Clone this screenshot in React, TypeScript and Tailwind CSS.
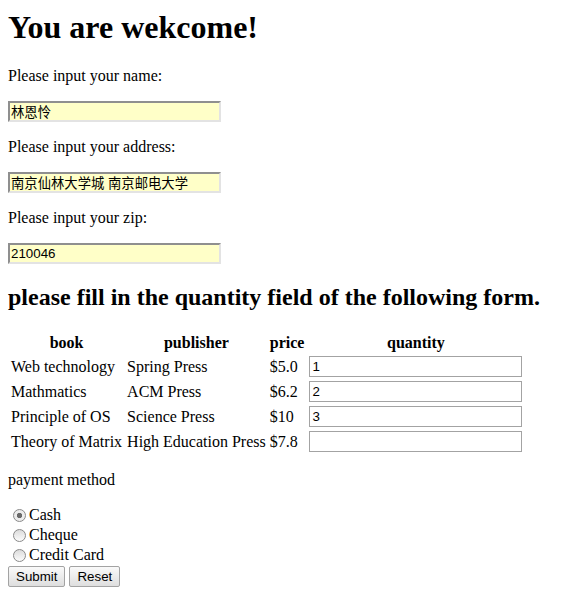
const books = [
  { title: "Web technology", publisher: "Spring Press", price: "$5.0", qty: "1" },
  { title: "Mathmatics", publisher: "ACM Press", price: "$6.2", qty: "2" },
  { title: "Principle of OS", publisher: "Science Press", price: "$10", qty: "3" },
  { title: "Theory of Matrix", publisher: "High Education Press", price: "$7.8", qty: "" },
];

const fieldCls =
  "block w-[213px] h-[21px] px-[1px] bg-[#ffffc8] border-2 border-t-[#8f8f8f] border-l-[#8f8f8f] border-b-[#e3e3e3] border-r-[#e3e3e3] text-[13.33px] leading-[15px] text-black font-['Liberation_Sans','Noto_Sans_CJK_SC',sans-serif] outline-none";

const radioCls =
  "appearance-none w-[13px] h-[13px] ml-[5px] mr-[3px] rounded-full border border-[#8a8a8a] bg-[linear-gradient(#dcdcdc,#fbfbfb)] checked:bg-[radial-gradient(circle,#6a6a6a_0_2.3px,#ececec_3px)]";

const btnCls =
  "h-[21px] px-[7px] rounded-[2px] border border-[#a3a3a3] bg-[linear-gradient(#fafafa,#dedede)] text-[13.33px] leading-[15px] text-black font-['Liberation_Sans',sans-serif]";

function Field({ value }: { value: string }) {
  return (
    <p className="my-4">
      <input type="text" defaultValue={value} className={fieldCls} />
    </p>
  );
}

export default function App() {
  return (
    <div className="px-2 bg-white text-black text-[16px] leading-[18px] font-['Liberation_Serif','Noto_Sans_CJK_SC',serif] min-h-[595px] flow-root">
      <h1 className="text-[32px] leading-[37px] font-bold mt-[9px] mb-[21.44px]">You are wekcome!</h1>
      <form onSubmit={(e) => e.preventDefault()}>
        <p className="my-4">Please input your name:</p>
        <Field value="林恩怜" />
        <p className="my-4">Please input your address:</p>
        <Field value="南京仙林大学城 南京邮电大学" />
        <p className="my-4">Please input your zip:</p>
        <Field value="210046" />

        <h2 className="text-[24px] leading-[27px] font-bold my-[19.92px]">
          please fill in the quantity field of the following form.
        </h2>

        <table className="border-separate border-spacing-[2px]">
          <thead>
            <tr>
              <th className="py-[1px] pl-[1px] pr-[2px] font-bold text-center">book</th>
              <th className="p-[1px] font-bold text-center">publisher</th>
              <th className="py-[1px] pl-[1px] pr-[2px] font-bold text-center">price</th>
              <th className="p-[1px] font-bold text-center">quantity</th>
            </tr>
          </thead>
          <tbody>
            {books.map((b) => (
              <tr key={b.title}>
                <td className="py-[1px] pl-[1px] pr-[2px] whitespace-nowrap">{b.title}</td>
                <td className="p-[1px] whitespace-nowrap">{b.publisher}</td>
                <td className="py-[1px] pl-[1px] pr-[2px] whitespace-nowrap">{b.price}</td>
                <td className="p-[1px]">
                  <input
                    type="text"
                    defaultValue={b.qty}
                    className="block w-[213px] h-[21px] px-[2px] bg-white border border-[#a3a3a3] text-[13.33px] leading-[15px] font-['Liberation_Sans',sans-serif] outline-none"
                  />
                </td>
              </tr>
            ))}
          </tbody>
        </table>

        <p className="my-4">payment method</p>

        <div className="flex flex-col">
          <label className="flex items-center h-5">
            <input type="radio" name="pay" defaultChecked className={radioCls} />
            Cash
          </label>
          <label className="flex items-center h-5">
            <input type="radio" name="pay" className={radioCls} />
            Cheque
          </label>
          <label className="flex items-center h-5">
            <input type="radio" name="pay" className={radioCls} />
            Credit Card
          </label>
        </div>
        <div className="flex gap-1 mt-px">
          <button type="submit" className={btnCls}>Submit</button>
          <button type="reset" className={btnCls}>Reset</button>
        </div>
      </form>
    </div>
  );
}
